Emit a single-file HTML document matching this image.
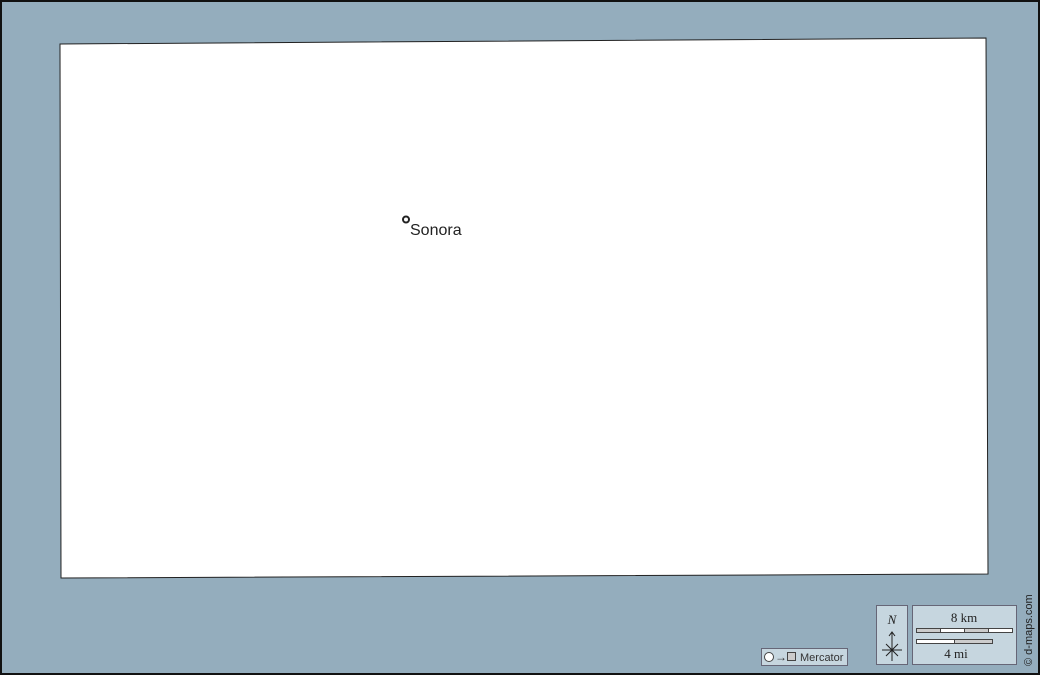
<!DOCTYPE html>
<html><head><meta charset="utf-8"><style>
html,body{margin:0;padding:0;width:1040px;height:675px;overflow:hidden;background:#94adbd}
svg{display:block}
</style></head><body>
<svg width="1040" height="675" viewBox="0 0 1040 675" xmlns="http://www.w3.org/2000/svg">
<rect x="0" y="0" width="1040" height="675" fill="#94adbd"/>
<rect x="1" y="1" width="1038" height="673" fill="none" stroke="#111" stroke-width="2"/>
<polygon points="60,44 986,38 988,574 61,578" fill="#fff" stroke="#222" stroke-width="1"/>
<circle cx="406" cy="219.5" r="3" fill="none" stroke="#222" stroke-width="2"/>
<text x="410" y="235" font-family="Liberation Sans, sans-serif" font-size="16" fill="#222">Sonora</text>
<rect x="761.5" y="648.5" width="86" height="17" fill="#c6d6df" stroke="#667" stroke-width="1"/>
<circle cx="769" cy="657" r="4.5" fill="#fff" stroke="#444" stroke-width="1"/>
<text x="775" y="661" font-family="Liberation Sans, sans-serif" font-size="12" fill="#333">→</text>
<rect x="787.5" y="652.5" width="8" height="8" fill="#ccc" stroke="#444" stroke-width="1"/>
<text x="800" y="661" font-family="Liberation Sans, sans-serif" font-size="11" fill="#333">Mercator</text>
<rect x="876.5" y="605.5" width="31" height="59" fill="#c6d6df" stroke="#667" stroke-width="1"/>
<text x="892" y="624" text-anchor="middle" font-family="Liberation Serif, serif" font-style="italic" font-size="13" fill="#222">N</text>
<line x1="892" y1="632" x2="892" y2="661" stroke="#222" stroke-width="1"/>
<polyline points="889,636 892,632 895,636" fill="none" stroke="#222" stroke-width="1"/>
<line x1="882" y1="650" x2="902" y2="650" stroke="#222" stroke-width="1"/>
<line x1="886" y1="644" x2="898" y2="656" stroke="#222" stroke-width="1"/>
<line x1="898" y1="644" x2="886" y2="656" stroke="#222" stroke-width="1"/>
<rect x="912.5" y="605.5" width="104" height="59" fill="#c6d6df" stroke="#667" stroke-width="1"/>
<text x="964" y="622" text-anchor="middle" font-family="Liberation Serif, serif" font-size="13" fill="#222">8 km</text>
<rect x="916.5" y="628.5" width="24" height="4" fill="#ccc" stroke="#444" stroke-width="1"/>
<rect x="940.5" y="628.5" width="24" height="4" fill="#fff" stroke="#444" stroke-width="1"/>
<rect x="964.5" y="628.5" width="24" height="4" fill="#ccc" stroke="#444" stroke-width="1"/>
<rect x="988.5" y="628.5" width="24" height="4" fill="#fff" stroke="#444" stroke-width="1"/>
<rect x="916.5" y="639.5" width="38" height="4" fill="#fff" stroke="#444" stroke-width="1"/>
<rect x="954.5" y="639.5" width="38" height="4" fill="#ccc" stroke="#444" stroke-width="1"/>
<text x="956" y="658" text-anchor="middle" font-family="Liberation Serif, serif" font-size="13" fill="#222">4 mi</text>
<text transform="translate(1032,666) rotate(-90)" font-family="Liberation Sans, sans-serif" font-size="11" fill="#222">© d-maps.com</text>
</svg>
</body></html>
